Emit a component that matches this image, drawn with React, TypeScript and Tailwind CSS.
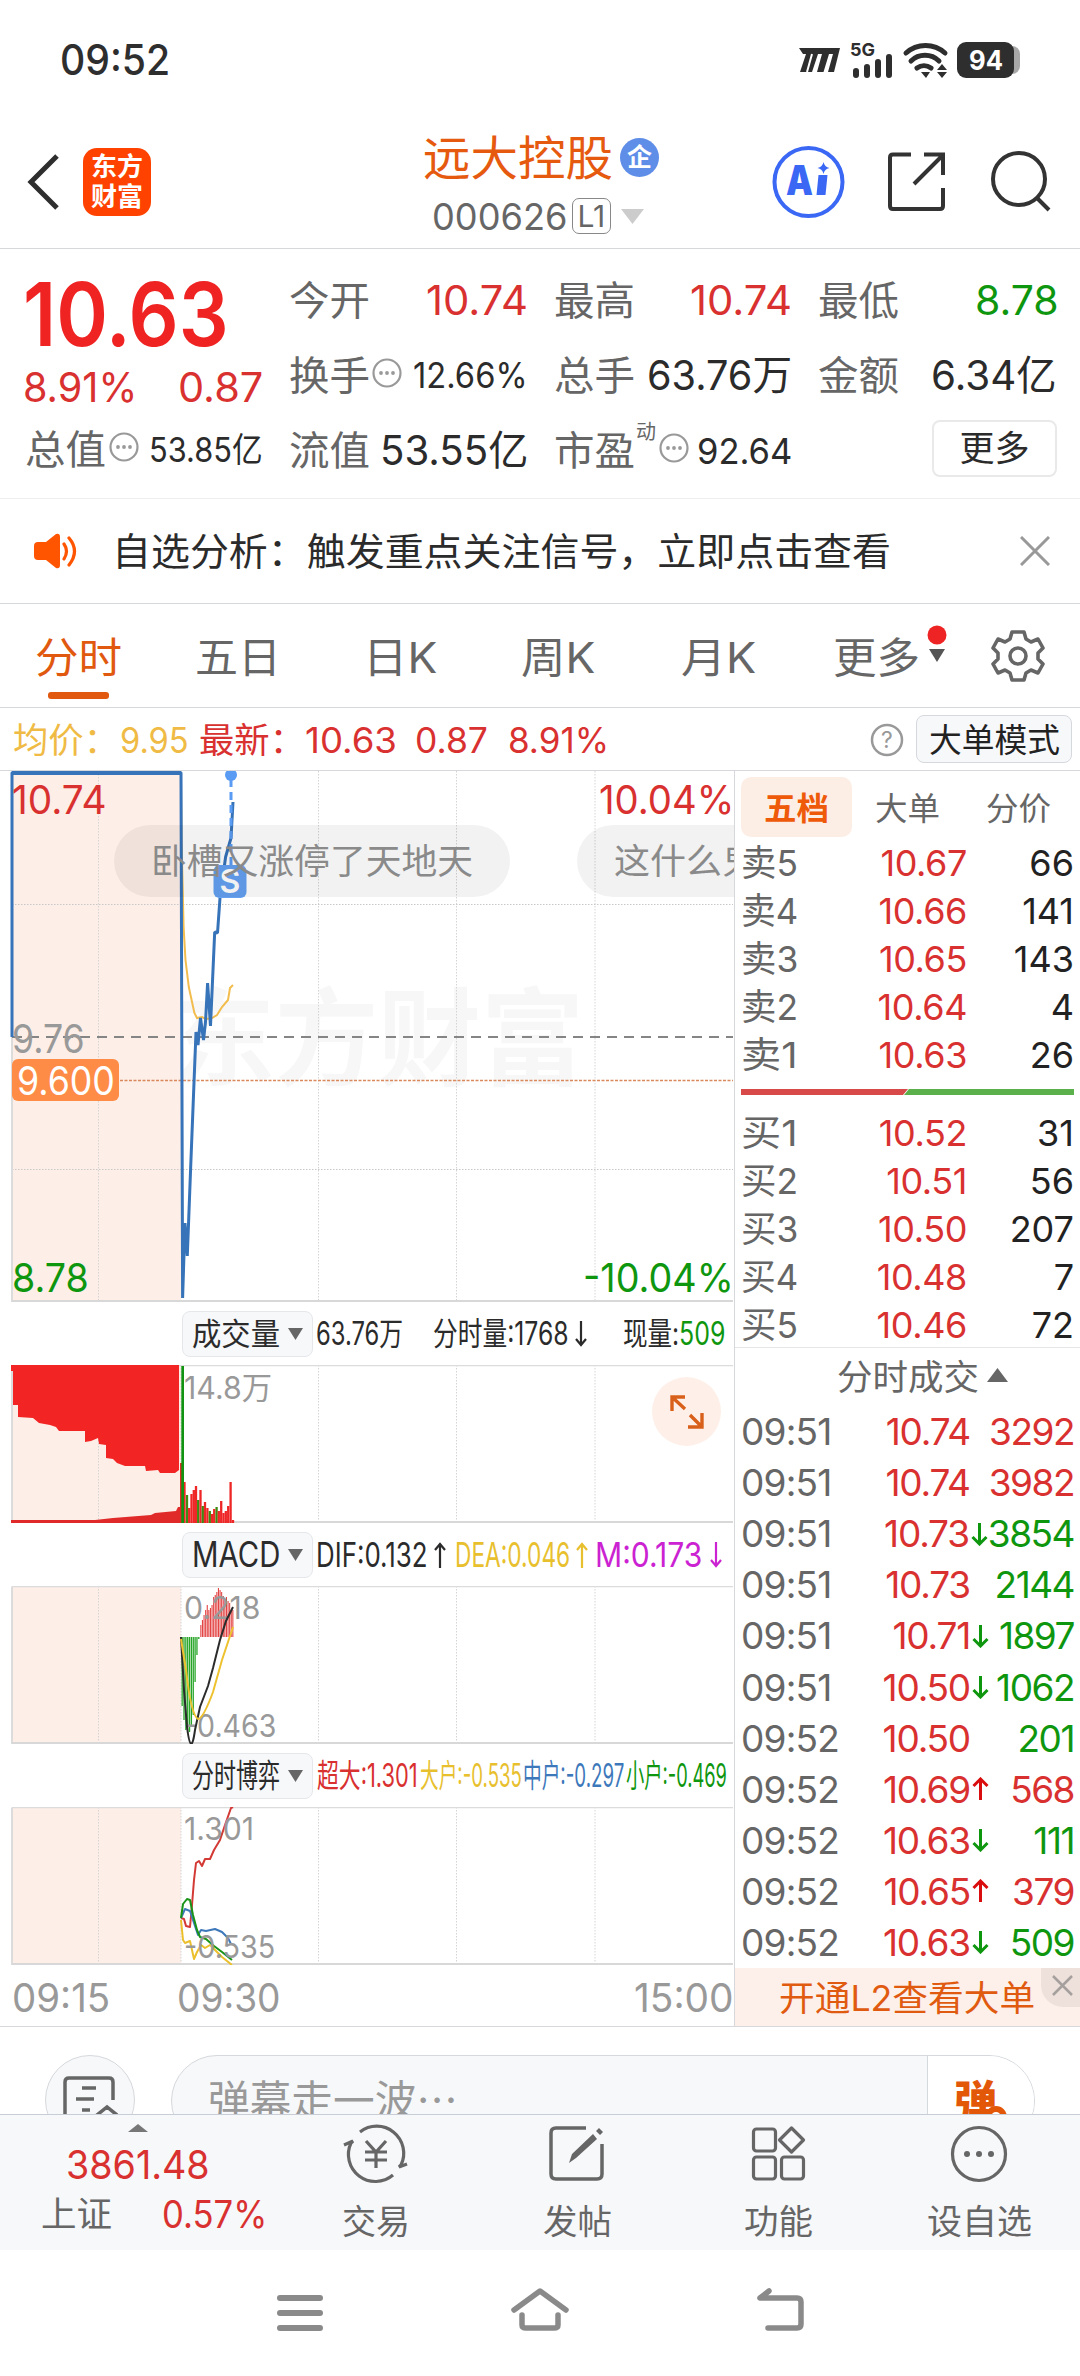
import { useLayoutEffect, useRef, useState } from "react";
import type { ReactNode } from "react";

// Single line label squeezed or stretched to the width of its own box.
function Fit({ className, children }: { className: string; children: ReactNode }) {
  const box = useRef<HTMLSpanElement>(null);
  const inner = useRef<HTMLSpanElement>(null);
  const [scale, setScale] = useState(1);

  useLayoutEffect(() => {
    if (!box.current || !inner.current) return;
    setScale(box.current.clientWidth / inner.current.offsetWidth);
  }, [children]);

  return (
    <span ref={box} className={`block shrink-0 whitespace-nowrap leading-none ${className}`}>
      <span ref={inner} className="block w-max origin-left" style={{ transform: `scaleX(${scale})` }}>
        {children}
      </span>
    </span>
  );
}

const RED = "text-[#d93030]";
const GREEN = "text-[#0f960f]";

const sells = [
  ["卖5", "10.67", "66"],
  ["卖4", "10.66", "141"],
  ["卖3", "10.65", "143"],
  ["卖2", "10.64", "4"],
  ["卖1", "10.63", "26"],
];

const buys = [
  ["买1", "10.52", "31"],
  ["买2", "10.51", "56"],
  ["买3", "10.50", "207"],
  ["买4", "10.48", "7"],
  ["买5", "10.46", "72"],
];

type Tick = { time: string; price: string; dir?: "up" | "down"; vol: string; buy: boolean };

const ticks: Tick[] = [
  { time: "09:51", price: "10.74", vol: "3292", buy: true },
  { time: "09:51", price: "10.74", vol: "3982", buy: true },
  { time: "09:51", price: "10.73", dir: "down", vol: "3854", buy: false },
  { time: "09:51", price: "10.73", vol: "2144", buy: false },
  { time: "09:51", price: "10.71", dir: "down", vol: "1897", buy: false },
  { time: "09:51", price: "10.50", dir: "down", vol: "1062", buy: false },
  { time: "09:52", price: "10.50", vol: "201", buy: false },
  { time: "09:52", price: "10.69", dir: "up", vol: "568", buy: true },
  { time: "09:52", price: "10.63", dir: "down", vol: "111", buy: false },
  { time: "09:52", price: "10.65", dir: "up", vol: "379", buy: true },
  { time: "09:52", price: "10.63", dir: "down", vol: "509", buy: false },
];

// x, top, is up
const volumeBars: [number, number, boolean][] = [
  [184.5, 117, true], [187, 130, false], [189.2, 143, true], [191.5, 129, true], [193.8, 125, true],
  [196, 121, true], [198.2, 135, false], [200.5, 125, true], [202.8, 141, false], [205, 137, true],
  [207.4, 143, true], [209.8, 146, false], [212, 149, true], [214.2, 144, true], [216.6, 142, false],
  [218.8, 146, true], [221.2, 136, true], [223.5, 148, true], [225.8, 146, true], [228.2, 141, true],
  [230.6, 117, true], [233, 155, true],
];

const macdGreen = [69, 83, 93, 97, 95, 90, 78, 45, 18, 2];
const macdRed = [12, 17, 22, 27, 32, 27, 29, 32, 40, 42, 45, 49, 47, 45, 41, 38, 40, 36, 34, 27, 27];

function StatusBar() {
  return (
    <div className="flex h-[100px] items-start pt-[39px] text-[#2e2e2e]">
      <Fit className="ml-[60px] w-[110px] text-[42px] font-medium">09:52</Fit>
      <svg className="ml-[627px] h-[42px] w-[226px]" viewBox="797 39 226 42" fill="#2e2e2e">
        <path d="M799 48H840L834 72H828L833 54H829L823.500 72H817L822 54H818L812 72H800L806 54L803 54Z" />
        <path d="M807 72L812 54" stroke="#fff" strokeWidth="2" />
        <g stroke="#2e2e2e" strokeWidth="6" strokeLinecap="round">
          <path d="M856 71v4M867 67v8M878 62v13M889 57v18" />
        </g>
        <g fill="none" stroke="#2e2e2e" strokeWidth="5" strokeLinecap="round">
          <path d="M906 53a29 29 0 0 1 39 0M911 61a20 20 0 0 1 28 0M917 68a12 12 0 0 1 14 0" />
        </g>
        <path d="M921 72h9l-4 6zM937 70l5-6 5 6zM937 72h10l-5 6z" />
        <rect x="1003" y="46" width="17" height="28" rx="8" fill="#a8a8a8" />
        <rect x="957" y="42" width="57" height="36" rx="9" />
        <text x="850" y="56" fontSize="18" fontWeight="700" textLength="25" lengthAdjust="spacingAndGlyphs">5G</text>
        <text x="969" y="70" fontSize="27" fontWeight="700" fill="#fff" textLength="34" lengthAdjust="spacingAndGlyphs">94</text>
      </svg>
    </div>
  );
}

function Header() {
  return (
    <div className="flex h-[149px] items-start border-b border-[#d6d8db]">
      <svg className="ml-[24px] mt-[52px] h-[60px] w-[38px]" viewBox="0 0 38 60" fill="none" stroke="#2e2e2e" strokeWidth="5">
        <path d="M33 4L7 30L33 56" />
      </svg>
      <div className="ml-[21px] mt-[48px] flex h-[68px] w-[68px] flex-col items-center justify-center gap-[4px] rounded-[14px] bg-[#ff4200] font-bold text-white">
        <Fit className="w-[52px] text-[26px]">东方</Fit>
        <Fit className="w-[52px] text-[26px]">财富</Fit>
      </div>
      <div className="ml-[272px] mt-[34px] w-[240px]">
        <div className="flex h-[46px] items-center">
          <Fit className="w-[190px] text-[47px] text-[#e65a10]">远大控股</Fit>
          <div className="ml-[7px] flex h-[39px] w-[39px] items-center justify-center rounded-full bg-[#5f8ee8] text-[25px] font-bold leading-none text-white">
            企
          </div>
        </div>
        <div className="mt-[18px] flex h-[36px] items-center text-[#666]">
          <Fit className="ml-[9px] w-[135px] text-[37px]">000626</Fit>
          <div className="ml-[5px] flex h-[36px] w-[39px] items-center justify-center rounded-[7px] border-[1.5px] border-[#888]">
            <Fit className="w-[28px] text-[30px]">L1</Fit>
          </div>
          <svg className="ml-[10px] h-[15px] w-[23px]" viewBox="0 0 23 15" fill="#ccc"><path d="M0 0H23L11.500 15Z" /></svg>
        </div>
      </div>
      <svg className="ml-[108px] mt-[44px] h-[76px] w-[76px]" viewBox="771 144 76 76">
        <circle cx="808.5" cy="182" r="34" fill="none" stroke="#3a68f5" strokeWidth="4" />
        <text x="786" y="195" fontSize="41" fontWeight="900" fill="#3a68f5" textLength="27" lengthAdjust="spacingAndGlyphs">A</text>
        <path d="M818.500 175h9l-2 20h-9zM823.500 162q1 5 6 6q-5 1-6 6q-1-5-6-6q5-1 6-6z" fill="#3a68f5" />
      </svg>
      <svg className="ml-[39px] mt-[50px] h-[64px] w-[64px]" viewBox="886 150 64 64" fill="none" stroke="#333" strokeWidth="4">
        <path d="M911 154.500H893q-3 0-3 3V206q0 3 3 3H940q3 0 3-3V188M924 154.500H943V175M943 155L914 184" />
      </svg>
      <svg className="ml-[38px] mt-[49px] h-[64px] w-[64px]" viewBox="988 149 64 64" fill="none" stroke="#333" strokeWidth="4">
        <circle cx="1019" cy="179" r="26" />
        <path d="M1037 198L1049 210" />
      </svg>
    </div>
  );
}

function Dots() {
  return (
    <svg className="h-[30px] w-[30px] shrink-0" viewBox="0 0 30 30" fill="#999">
      <circle cx="15" cy="15" r="13.500" fill="none" stroke="#999" strokeWidth="2.200" />
      <circle cx="9" cy="15" r="1.900" />
      <circle cx="15" cy="15" r="1.900" />
      <circle cx="21" cy="15" r="1.900" />
    </svg>
  );
}

function Cell({ children }: { children: ReactNode }) {
  return <div className="flex h-[75px] items-center justify-between">{children}</div>;
}

function Label({ children }: { children: ReactNode }) {
  return <Fit className="w-[81px] text-[40px] text-[#666]">{children}</Fit>;
}

function Stats() {
  return (
    <div className="flex h-[250px] border-b border-[#eeeeee] pt-[14px] text-[#2b2b2b]">
      <div className="ml-[25px] w-[238px]">
        <div className="flex h-[101px] items-center">
          <Fit className="ml-[-2px] w-[206px] text-[88px] font-semibold text-[#f02323]">10.63</Fit>
        </div>
        <div className={`flex h-[46px] items-center justify-between ${RED}`}>
          <Fit className="ml-[-2px] w-[114px] text-[41px]">8.91%</Fit>
          <Fit className="w-[85px] text-[41px]">0.87</Fit>
        </div>
        <div className="mt-[1px] flex h-[78px] items-center justify-between">
          <Label>总值</Label>
          <div className="ml-[3px] mr-auto mt-[-6px]"><Dots /></div>
          <Fit className="w-[114px] text-[34px]">53.85亿</Fit>
        </div>
      </div>
      <div className="ml-[26px] grid grid-cols-[239px_238px_239px] content-start gap-x-[26px]">
        <Cell><Label>今开</Label><Fit className={`w-[102px] text-[41px] ${RED}`}>10.74</Fit></Cell>
        <Cell><Label>最高</Label><Fit className={`w-[102px] text-[41px] ${RED}`}>10.74</Fit></Cell>
        <Cell><Label>最低</Label><Fit className={`ml-auto mr-[-2px] w-[84px] text-[41px] ${GREEN}`}>8.78</Fit></Cell>
        <Cell>
          <Label>换手</Label>
          <div className="ml-[2px] mr-auto mt-[-6px]"><Dots /></div>
          <Fit className="w-[115px] text-[35px]">12.66%</Fit>
        </Cell>
        <Cell><Label>总手</Label><Fit className="w-[145px] text-[41px]">63.76万</Fit></Cell>
        <Cell><Label>金额</Label><Fit className="w-[126px] text-[41px]">6.34亿</Fit></Cell>
        <Cell><Label>流值</Label><Fit className="w-[148px] text-[41px]">53.55亿</Fit></Cell>
        <Cell>
          <Label>市盈</Label>
          <span className="-mt-[38px] ml-[1px] text-[20px] leading-none text-[#666]">动</span>
          <div className="ml-[3px] mr-auto mt-[-6px]"><Dots /></div>
          <Fit className="w-[95px] text-[36px]">92.64</Fit>
        </Cell>
        <div className="ml-[114px] mt-[7px] flex h-[57px] w-[125px] items-center justify-center rounded-[8px] border-2 border-[#e9e9e9]">
          <Fit className="w-[70px] text-[35px]">更多</Fit>
        </div>
      </div>
    </div>
  );
}

function Notice() {
  return (
    <div className="flex h-[105px] items-center border-b border-[#d6d8db]">
      <svg className="ml-[33px] h-[38px] w-[48px]" viewBox="0 0 48 38" fill="#ff5500">
        <path d="M5 10H13L23 2Q27 1 27 5V33Q27 37 23 36L13 28H5Q1 28 1 24V14Q1 10 5 10Z" />
        <path d="M31 12Q36 19 31 27M36 6Q47 19 36 33" fill="none" stroke="#ff5500" strokeWidth="3.200" strokeLinecap="round" />
      </svg>
      <Fit className="ml-[31px] w-[779px] text-[38px] text-[#2b2b2b]">自选分析：触发重点关注信号，立即点击查看</Fit>
      <svg className="ml-[129px] h-[30px] w-[30px]" viewBox="0 0 30 30" stroke="#999" strokeWidth="3">
        <path d="M1 1L29 29M29 1L1 29" />
      </svg>
    </div>
  );
}

function PeriodTabs() {
  return (
    <div className="flex h-[104px] items-start border-b border-[#d6d8db] pt-[33px] text-[42px] text-[#666]">
      <div className="ml-[35px] flex w-[87px] flex-col items-center">
        <Fit className="w-[87px] text-[#e0590f]">分时</Fit>
        <div className="mt-[13px] h-[7px] w-[61px] rounded-[3px] bg-[#e0590f]" />
      </div>
      <Fit className="ml-[73px] w-[86px]">五日</Fit>
      <Fit className="ml-[82px] w-[74px]">日K</Fit>
      <Fit className="ml-[84px] w-[74px]">周K</Fit>
      <Fit className="ml-[86px] w-[75px]">月K</Fit>
      <Fit className="ml-[77px] w-[87px]">更多</Fit>
      <svg className="ml-[7px] mt-[-12px] h-[40px] w-[20px]" viewBox="0 0 20 40">
        <circle cx="10" cy="10" r="9.500" fill="#ee2424" />
        <path d="M2 24H18L10 37Z" fill="#555" />
      </svg>
      <svg className="ml-[44px] mt-[-8px] h-[54px] w-[54px]" viewBox="-27 -27 54 54" fill="none" stroke="#666" strokeWidth="3.600" strokeLinejoin="round">
        <path d="M-6 -24H6L8 -17L13 -14L20 -17L25 -8L20 -3V3L25 8L20 17L13 14L8 17L6 24H-6L-8 17L-13 14L-20 17L-25 8L-20 3V-3L-25 -8L-20 -17L-13 -14L-8 -17Z" />
        <circle r="8" />
      </svg>
    </div>
  );
}

function QuoteLine() {
  return (
    <div className={`flex h-[63px] items-center border-b border-[#d6d8db] pt-[2px] text-[35px] ${RED}`}>
      <Fit className="ml-[13px] w-[106px] text-[#efbb45]">均价：</Fit>
      <Fit className="ml-[1px] w-[69px] text-[#efbb45]">9.95</Fit>
      <Fit className="ml-[10px] w-[106px]">最新：</Fit>
      <Fit className="w-[92px]">10.63</Fit>
      <Fit className="ml-[18px] w-[73px]">0.87</Fit>
      <Fit className="ml-[20px] w-[101px]">8.91%</Fit>
      <svg className="ml-[261px] h-[34px] w-[34px]" viewBox="0 0 34 34" fill="#999">
        <circle cx="17" cy="17" r="15" fill="none" stroke="#999" strokeWidth="2.500" />
        <text x="17" y="25" fontSize="23" textAnchor="middle">?</text>
      </svg>
      <div className="ml-[12px] mt-[-2px] flex h-[48px] w-[156px] items-center justify-center rounded-[8px] border-[1.5px] border-[#d5d8dd] bg-[#f7f8fa] pt-[2px]">
        <Fit className="w-[131px] text-[33px] text-[#222]">大单模式</Fit>
      </div>
    </div>
  );
}

function Grid({ top, height }: { top: number; height: number }) {
  return (
    <>
      <rect x="12" y={top} width="169" height={height} fill="#fdeee7" />
      <path
        d={`M98.500 ${top}v${height}M181 ${top}v${height}M318.500 ${top}v${height}M456.500 ${top}v${height}M595 ${top}v${height}`}
        stroke="#d4d4d4"
        strokeWidth="1"
        strokeDasharray="1.500 1.500"
      />
      <path d={`M12 ${top + 0.5}v${height}`} stroke="#dcdcdc" strokeWidth="2" />
      <path d={`M12 ${top + 0.5}H733`} stroke="#dcdcdc" strokeWidth="1.500" />
      <path d={`M12 ${top + height - 1}H733`} stroke="#d8d8d8" strokeWidth="2" />
    </>
  );
}

function PriceChart() {
  return (
    <div className="relative h-[531px] w-[734px] overflow-hidden">
      <div className="absolute left-[172px] top-[215px] font-bold text-[#f7f7f7]">
        <Fit className="w-[412px] text-[106px]">东方财富</Fit>
      </div>
      <svg className="absolute left-0 top-0 h-[531px] w-[734px]" viewBox="0 771 734 531" fill="none">
        <rect x="12" y="771" width="169" height="531" fill="#fdeee7" />
        <path d="M98.500 771V1302M318.500 771V1302M456.500 771V1302M595 771V1302" stroke="#d4d4d4" strokeDasharray="1.500 1.500" />
        <path d="M12 904.500H733M12 1169.500H733" stroke="#c8c8c8" strokeDasharray="1.500 1.500" />
        <path d="M12 1037V1302" stroke="#dcdcdc" strokeWidth="2" />
        <path d="M12 1301H733" stroke="#d8d8d8" strokeWidth="2" />
        <path d="M181 780L181.500 840L183.600 927L185.500 960L188.800 987L194.400 1013L197 1018L202 1017L206 1019L212 1018L217 1015L222 1007L228 1000L230 988L233 985" stroke="#f2bd4e" strokeWidth="2" />
        <path d="M12 1037H733" stroke="#858585" strokeWidth="2" strokeDasharray="10 7" />
        <path d="M12 1080.500H733" stroke="#d9895c" strokeWidth="1.500" strokeDasharray="3 1.500" />
        <path d="M12 1037V772.500H181L182.600 1298L185 1223L187.300 1256L190.600 1169L196 1032L198 1045L200.500 1018L203.500 1040L205.500 1022L207.600 983L210.500 1026L214.700 932L217.500 933L220 898L225.600 857L231 838L233 802" stroke="#3673b9" strokeWidth="3" strokeLinejoin="bevel" />
        <path d="M12 773H181" stroke="#3673b9" strokeWidth="4" />
        <path d="M231 779V867" stroke="#5a9bf3" strokeWidth="3" strokeDasharray="8 5" />
        <circle cx="231" cy="775" r="6" fill="#5a9bf3" />
        <rect x="213.500" y="865" width="33" height="33" rx="6" fill="#64a1f2" />
        <text x="230" y="893" fontSize="32" fontWeight="600" textAnchor="middle" fill="#fff">S</text>
      </svg>
      <div className="absolute left-[114px] top-[54px] flex h-[72px] w-[396px] items-center justify-center rounded-full bg-black/5 text-[#8a8a8a]">
        <Fit className="w-[322px] text-[35px]">卧槽又涨停了天地天</Fit>
      </div>
      <div className="absolute left-[577px] top-[54px] flex h-[72px] w-[230px] items-center rounded-full bg-black/5 text-[#8a8a8a]">
        <Fit className="ml-[37px] w-[144px] text-[35px]">这什么鬼</Fit>
      </div>
      <div className={`absolute left-[12px] top-[9px] ${RED}`}><Fit className="w-[95px] text-[40px]">10.74</Fit></div>
      <div className={`absolute right-0 top-[9px] ${RED}`}><Fit className="w-[135px] text-[40px]">10.04%</Fit></div>
      <div className="absolute left-[12px] top-[248px] text-[#999]"><Fit className="w-[73px] text-[40px]">9.76</Fit></div>
      <div className="absolute left-[12px] top-[288px] flex h-[42px] w-[107px] items-center justify-center rounded-[6px] bg-[#ff8c46] text-white">
        <Fit className="w-[98px] text-[39px]">9.600</Fit>
      </div>
      <div className={`absolute left-[12px] top-[487px] ${GREEN}`}><Fit className="w-[77px] text-[40px]">8.78</Fit></div>
      <div className={`absolute right-0 top-[487px] ${GREEN}`}><Fit className="w-[151px] text-[40px]">-10.04%</Fit></div>
    </div>
  );
}

function IndicatorBar({ name, nameClass, children }: { name: string; nameClass: string; children: ReactNode }) {
  return (
    <div className="flex h-[63px] items-center pl-[182px] text-[32px] text-[#2b2b2b]">
      <div className="flex h-[46px] w-[131px] shrink-0 items-center rounded-[8px] border-[1.500px] border-[#e5e7eb] bg-[#f7f8fa] pl-[9px]">
        <Fit className={nameClass}>{name}</Fit>
        <svg className="ml-[8px] h-[12px] w-[15px]" viewBox="0 0 15 12" fill="#666"><path d="M0 0H15L7.500 12Z" /></svg>
      </div>
      {children}
    </div>
  );
}

function Arrow({ up, className }: { up?: boolean; className: string }) {
  return (
    <svg className={`h-[26px] w-[12px] shrink-0 ${className}`} viewBox="0 0 12 26" fill="none" stroke="currentColor" strokeWidth="2.200">
      {up ? <path d="M6 26V2M1 8L6 2L11 8" /> : <path d="M6 0V24M1 18L6 24L11 18" />}
    </svg>
  );
}

function VolumeChart() {
  return (
    <div className="relative h-[158px] w-[734px]">
      <svg className="absolute left-0 top-0 h-[158px] w-[734px]" viewBox="0 0 734 158">
        <Grid top={0} height={158} />
        <path
          d="M11 0V6H13V40H18V52L33 53L39 58L50 60L56 62L59 66H85V77L91 76L98 73L99 79L106 80V93L113 94L117 98L125 101H145L146 106L158 105L160 108H175L179 105V0Z"
          fill="#f22424"
        />
        <path d="M11 158V155H95L113 153L151 150L155 148L176 146L178 142H180V98H182V158Z" fill="#e02a2a" />
        {volumeBars.map(([x, y, up]) => (
          <rect key={x} x={x - 1.15} y={y} width="2.300" height={158 - y} fill={up ? "#ee2626" : "#3f8a12"} />
        ))}
        <rect x="181.300" y="1" width="2.700" height="157" fill="#129412" />
      </svg>
      <div className="absolute left-[184px] top-[7px] text-[#999]"><Fit className="w-[88px] text-[31px]">14.8万</Fit></div>
      <div className="absolute left-[652px] top-[12px] flex h-[69px] w-[69px] items-center justify-center rounded-full bg-[#fef0e8]">
        <svg className="h-[34px] w-[34px]" viewBox="0 0 34 34" fill="none" stroke="#d9601a" strokeWidth="3.400">
          <path d="M2 16V2H15M2 2L15 14M32 18V32H18M32 32L20 20" />
        </svg>
      </div>
    </div>
  );
}

function MacdChart() {
  return (
    <div className="relative h-[158px] w-[734px]">
      <svg className="absolute left-0 top-0 h-[158px] w-[734px]" viewBox="0 0 734 158" fill="none">
        <Grid top={0} height={158} />
        {macdGreen.map((h, i) => (
          <rect key={i} x={181.5 + i * 1.85} y="51" width="1.300" height={h} fill="#27a527" />
        ))}
        {macdRed.map((h, i) => (
          <rect key={i} x={200.3 + i * 1.6} y={51 - h} width="1.100" height={h} fill="#e34444" />
        ))}
      </svg>
      <div className="absolute left-[184px] top-[6px] text-[#999]"><Fit className="w-[76px] text-[31px]">0.218</Fit></div>
      <div className="absolute left-[184px] top-[124px] text-[#999]"><Fit className="w-[92px] text-[31px]">-0.463</Fit></div>
      <svg className="absolute left-0 top-0 h-[158px] w-[734px]" viewBox="0 0 734 158" fill="none" strokeWidth="2">
        <path d="M181 51L184 104L187 141Q191 173 195 144L200 121L208 100L213 82L220 54L226 35L233 21" stroke="#2b2b2b" />
        <path d="M181 53L186 84Q191 129 198 133Q203 133 213 106L222 74L233 41" stroke="#edc22e" />
      </svg>
    </div>
  );
}

function FlowChart() {
  return (
    <div className="relative h-[158px] w-[734px]">
      <svg className="absolute left-0 top-0 h-[158px] w-[734px]" viewBox="0 1807 734 158" fill="none" strokeWidth="2" strokeLinejoin="round">
        <Grid top={1807} height={158} />
        <path d="M181 1918L184 1919L186 1926L190 1927L192 1905L194 1880L196 1863L199 1861L202 1866L205 1859L210 1859L214 1850L220 1840L225 1825L231 1808L233 1807" stroke="#d33a35" />
        <path d="M181 1918L185 1909L190 1911L193 1920L198 1935L201 1930L206 1931L215 1929L222 1932L228 1938L231 1944" stroke="#3d78bb" />
        <path d="M181 1920L183 1940L185 1943L190 1941L194 1959L197 1952L201 1945L205 1948L210 1945L215 1950L222 1957L232 1965" stroke="#ebc02c" />
        <path d="M181 1918L183 1904L187 1899L190 1900L193 1915L197 1930L200 1937L206 1939L214 1946L222 1952L232 1960" stroke="#189318" />
      </svg>
      <div className="absolute left-[184px] top-[6px] text-[#999]"><Fit className="w-[70px] text-[31px]">1.301</Fit></div>
      <div className="absolute left-[184px] top-[124px] text-[#999]"><Fit className="w-[91px] text-[31px]">-0.535</Fit></div>
    </div>
  );
}

function Charts() {
  return (
    <div className="w-[735px] shrink-0 border-r border-[#d6d8db]">
      <PriceChart />
      <IndicatorBar name="成交量" nameClass="w-[88px] text-[31px]">
        <Fit className="ml-[3px] w-[87px]">63.76万</Fit>
        <Fit className="ml-[30px] w-[136px]">分时量:1768</Fit>
        <Arrow className="ml-[6px]" />
        <Fit className="ml-[36px] w-[56px]">现量:</Fit>
        <Fit className={`w-[46px] ${GREEN}`}>509</Fit>
      </IndicatorBar>
      <VolumeChart />
      <IndicatorBar name="MACD" nameClass="w-[88px] text-[35px]">
        <Fit className="ml-[3px] w-[112px] text-[34px]">DIF:0.132</Fit>
        <Arrow up className="ml-[6px]" />
        <Fit className="ml-[9px] w-[115px] text-[34px] text-[#e8c02e]">DEA:0.046</Fit>
        <Arrow up className="ml-[6px] text-[#e8c02e]" />
        <Fit className="ml-[7px] w-[107px] text-[34px] text-[#cb22d2]">M:0.173</Fit>
        <Arrow className="ml-[8px] text-[#cb22d2]" />
      </IndicatorBar>
      <MacdChart />
      <IndicatorBar name="分时博弈" nameClass="w-[88px] text-[32px]">
        <Fit className={`ml-[4px] w-[101px] ${RED}`}>超大:1.301</Fit>
        <Fit className="ml-[2px] w-[102px] text-[#e8c02e]">大户:-0.535</Fit>
        <Fit className="ml-[1px] w-[101px] text-[#3d78bb]">中户:-0.297</Fit>
        <Fit className={`ml-[2px] w-[101px] ${GREEN}`}>小户:-0.469</Fit>
      </IndicatorBar>
      <FlowChart />
      <div className="flex h-[62px] items-center pt-[4px] text-[40px] text-[#999]">
        <Fit className="ml-[12px] w-[98px]">09:15</Fit>
        <Fit className="ml-[67px] w-[104px]">09:30</Fit>
        <Fit className="ml-[353px] w-[100px]">15:00</Fit>
      </div>
    </div>
  );
}

function DepthRow({ row }: { row: string[] }) {
  return (
    <div className="flex h-[48px] shrink-0 items-center pl-[6px] pr-[6px] text-[36px] leading-none">
      <Fit className="w-[57px] text-[#666]">{row[0]}</Fit>
      <span className={`w-[169px] text-right tracking-[-0.4px] ${RED}`}>{row[1]}</span>
      <span className="flex-1 text-right text-[#222]">{row[2]}</span>
    </div>
  );
}

function TickRow({ tick }: { tick: Tick }) {
  return (
    <div className="flex h-[51.100px] items-center pl-[6px] pr-[6px] text-[37px] leading-none">
      <span className="w-[96px] tracking-[-0.800px] text-[#666]">{tick.time}</span>
      <span className={`w-[133px] text-right tracking-[-1.200px] ${RED}`}>{tick.price}</span>
      <div className="ml-[2px] w-[17px]">
        {tick.dir && (
          <svg
            className={tick.dir === "up" ? "h-[24px] w-[17px] text-[#d90d0d]" : "h-[24px] w-[17px] text-[#0f960f]"}
            viewBox="0 0 17 24"
            fill="none"
            stroke="currentColor"
            strokeWidth="3"
          >
            {tick.dir === "up" ? <path d="M8.500 23V2M1.500 9L8.500 2L15.500 9" /> : <path d="M8.500 1V22M1.500 15L8.500 22L15.500 15" />}
          </svg>
        )}
      </div>
      <span className={`flex-1 whitespace-nowrap text-right tracking-[-1.500px] ${tick.buy ? RED : GREEN}`}>{tick.vol}</span>
    </div>
  );
}

function OrderBook() {
  return (
    <div className="flex w-[345px] flex-col">
      <div className="flex h-[68px] items-start pl-[6px] pt-[6px] text-[32px] text-[#666]">
        <div className="flex h-[60px] w-[111px] items-center justify-center rounded-[10px] bg-[#fdeee5] pt-[3px] font-bold text-[#ee5a0a]">
          <Fit className="w-[65px]">五档</Fit>
        </div>
        <Fit className="ml-[23px] mt-[16px] w-[65px]">大单</Fit>
        <Fit className="ml-[46px] mt-[16px] w-[65px]">分价</Fit>
      </div>
      {sells.map((row) => <DepthRow key={row[0]} row={row} />)}
      <div className="h-[30px] pl-[6px] pt-[10px]">
        <svg className="h-[6px] w-[333px]" viewBox="0 0 333 6">
          <path d="M0 0H167L162 6H0Z" fill="#d84a4a" />
          <path d="M168 0H333V6H163Z" fill="#5bb04c" />
        </svg>
      </div>
      <div className="flex h-[239px] flex-col border-b border-[#e6e6e6]">
        {buys.map((row) => <DepthRow key={row[0]} row={row} />)}
      </div>
      <div className="flex h-[58px] items-center pl-[102px] text-[#666]">
        <Fit className="w-[142px] text-[35px]">分时成交</Fit>
        <svg className="mb-[5px] ml-[8px] h-[14px] w-[21px]" viewBox="0 0 21 14" fill="#666"><path d="M10.500 0L21 14H0Z" /></svg>
      </div>
      {ticks.map((tick, i) => <TickRow key={i} tick={tick} />)}
      <div className="relative flex flex-1 items-center bg-[#fdf0ea] pl-[44px] pt-[2px]">
        <Fit className="w-[256px] text-[35px] text-[#e05a10]">开通L2查看大单</Fit>
        <div className="absolute right-0 top-0 flex h-[39px] w-[39px] items-center justify-center rounded-bl-[22px] bg-[#eee0da] pb-[5px] pl-[4px]">
          <svg className="h-[21px] w-[21px]" viewBox="0 0 21 21" stroke="#a5a09e" strokeWidth="2.500"><path d="M1 1L20 20M20 1L1 20" /></svg>
        </div>
      </div>
    </div>
  );
}

function DanmakuInput() {
  return (
    <div className="flex h-[87px] items-start overflow-hidden pt-[28px]">
      <div className="ml-[45px] flex h-[90px] w-[90px] shrink-0 items-center justify-center rounded-full border-[1.500px] border-[#d5d8dc] bg-[#f7f8fa]">
        <svg className="h-[52px] w-[56px]" viewBox="0 0 56 52" fill="none" stroke="#666" strokeWidth="3.500">
          <path d="M51 26V8Q51 4 47 4H7Q3 4 3 8V46Q3 50 7 50H30M20 14H34M14 25H32M20 36H28" />
          <path d="M35 50V41L45 33L55 41V50M45 42V50" />
        </svg>
      </div>
      <div className="ml-[36px] flex h-[92px] w-[864px] shrink-0 items-center overflow-hidden rounded-full border-[1.500px] border-[#d5d8dc] bg-[#f7f8fa] text-[#999]">
        <Fit className="ml-[36px] w-[250px] text-[42px]">弹幕走一波⋯</Fit>
        <div className="ml-auto flex h-full w-[107px] items-center border-l border-[#d5d8dc] bg-white pl-[26px]">
          <span className="text-[43px] font-black leading-none text-[#e35808]">弹</span>
          <div className="-ml-[12px] mt-[32px] h-[22px] w-[22px] shrink-0 rounded-full border-[6px] border-[#e35808] bg-white" />
        </div>
      </div>
    </div>
  );
}

function BottomBar() {
  return (
    <div className="flex h-[136px] border-t border-[#c9ced6] bg-[#f7f8fa] text-[#666]">
      <div className="w-[270px]">
        <div className="flex flex-col items-center pl-[6px] pt-[9px]">
          <svg className="h-[8px] w-[20px]" viewBox="0 0 20 8" fill="#777"><path d="M10 0L20 8H0Z" /></svg>
          <Fit className={`mt-[13px] w-[144px] text-[40px] ${RED}`}>3861.48</Fit>
        </div>
        <div className="mt-[10px] flex items-center">
          <Fit className="ml-[41px] w-[71px] text-[35px]">上证</Fit>
          <Fit className={`ml-[50px] w-[105px] text-[38px] ${RED}`}>0.57%</Fit>
        </div>
      </div>
      <div className="ml-[36px] mt-[9px] flex w-[140px] flex-col items-center">
        <svg className="h-[60px] w-[68px]" viewBox="342 2124 68 60" fill="none" stroke="#666" strokeWidth="3.200">
          <path d="M360 2132A27 27 0 0 1 401 2165L399 2167L407 2164M393 2175A27 27 0 0 1 351 2143L353 2141L344 2145" />
          <path d="M366 2141L376 2152L386 2141M365 2152H387M365 2160H387M376 2152V2168" />
        </svg>
        <Fit className="mt-[21px] w-[68px] text-[34px]">交易</Fit>
      </div>
      <div className="ml-[61px] mt-[9px] flex w-[140px] flex-col items-center">
        <svg className="h-[60px] w-[60px]" viewBox="548 2124 60 60" fill="none" stroke="#666" strokeWidth="3.500">
          <path d="M587 2128H557Q552 2128 552 2133V2174Q552 2179 557 2179H598Q603 2179 603 2174V2144" />
          <path d="M570 2163L573 2154L594 2134L598 2139L577 2158ZM597 2131L600 2128L604 2132L601 2135Z" fill="#666" stroke="none" />
        </svg>
        <Fit className="mt-[21px] w-[69px] text-[34px]">发帖</Fit>
      </div>
      <div className="ml-[61px] mt-[9px] flex w-[140px] flex-col items-center">
        <svg className="h-[60px] w-[60px]" viewBox="748 2124 60 60" fill="none" stroke="#666" strokeWidth="3.200" strokeLinejoin="round">
          <rect x="753.500" y="2129" width="22" height="22" rx="3" />
          <rect x="753.500" y="2157" width="22" height="22" rx="3" />
          <rect x="781.500" y="2157" width="22" height="22" rx="3" />
          <path d="M791.500 2128L803.500 2140L791.500 2152L779.500 2140Z" />
        </svg>
        <Fit className="mt-[21px] w-[69px] text-[34px]">功能</Fit>
      </div>
      <div className="ml-[61px] mt-[9px] flex w-[140px] flex-col items-center">
        <svg className="h-[60px] w-[60px]" viewBox="-30 -30 60 60" fill="#666">
          <circle r="26.500" fill="none" stroke="#666" strokeWidth="3.200" />
          <circle cx="-12" r="3" />
          <circle r="3" />
          <circle cx="12" r="3" />
        </svg>
        <Fit className="mt-[21px] w-[105px] text-[34px]">设自选</Fit>
      </div>
    </div>
  );
}

function NavBar() {
  return (
    <div className="flex h-[126px] items-start pt-[36px]">
      <svg className="ml-[276px] h-[48px] w-[48px]" viewBox="276 2286 48 48" stroke="#8a8a8a" strokeWidth="6" strokeLinecap="round">
        <path d="M280 2298H320M280 2313H320M280 2328H320" />
      </svg>
      <svg className="ml-[185px] h-[48px] w-[62px]" viewBox="509 2286 62 48" fill="none" stroke="#8a8a8a" strokeWidth="5.500" strokeLinecap="round" strokeLinejoin="round">
        <path d="M514 2310L540 2291L566 2310M522 2315V2325Q522 2328 526 2328H554Q558 2328 558 2325V2315" />
      </svg>
      <svg className="ml-[184px] h-[48px] w-[52px]" viewBox="755 2286 52 48" fill="none" stroke="#8a8a8a" strokeWidth="5.500" strokeLinecap="round" strokeLinejoin="round">
        <path d="M769 2291L760 2298H797Q801 2298 801 2302V2324Q801 2328 797 2328H768" />
      </svg>
    </div>
  );
}

export default function App() {
  return (
    <div className="h-[2376px] w-[1080px] overflow-hidden bg-white font-['Inter','Noto_Sans_CJK_SC',sans-serif]">
      <StatusBar />
      <Header />
      <Stats />
      <Notice />
      <PeriodTabs />
      <QuoteLine />
      <div className="flex h-[1256px] border-b border-[#d6d8db]">
        <Charts />
        <OrderBook />
      </div>
      <DanmakuInput />
      <BottomBar />
      <NavBar />
    </div>
  );
}
